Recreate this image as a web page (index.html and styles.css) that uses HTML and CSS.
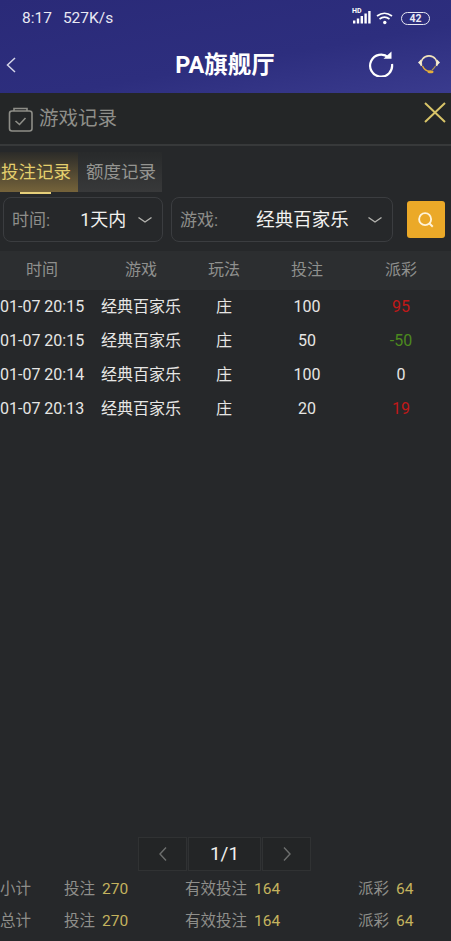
FILE: index.html
```html
<!DOCTYPE html>
<html lang="zh">
<head>
<meta charset="utf-8">
<title>PA旗舰厅</title>
<link rel="stylesheet" href="styles.css">
</head>
<body>
<div class="page">
  <div class="top">
    <div class="status">
      <div class="status-left"><span>8:17</span><span>527K/s</span></div>
      <div class="status-right">
        <div class="sigwrap">
          <span class="hd">HD</span>
          <svg class="sig" width="19" height="14" viewBox="0 0 19 14"><g fill="#fff"><rect x="1" y="10.500" width="2.400" height="3"/><rect x="4.800" y="8.500" width="2.400" height="5"/><rect x="8.600" y="6" width="2.400" height="7.500"/><rect x="12.400" y="3.500" width="2.400" height="10"/><rect x="16.200" y="1" width="2.400" height="12.500"/></g></svg>
        </div>
        <svg class="wifi" width="18" height="14" viewBox="0 0 18 14"><g fill="none" stroke="#fff" stroke-width="1.700"><path d="M1 5q7.500-5.500 15 0"/><path d="M3.500 8q5-3.600 10 0"/></g><circle cx="8.800" cy="11.500" r="1.700" fill="#fff"/></svg>
        <div class="battery">42</div>
      </div>
    </div>
    <div class="nav">
      <svg class="back" width="12" height="18" viewBox="0 0 12 18"><path d="M10 2 2.500 9 10 16" fill="none" stroke="#d5d5e8" stroke-width="1.500"/></svg>
      <div class="nav-title">PA旗舰厅</div>
      <svg class="refresh" width="26" height="26" viewBox="0 0 26 26"><path d="M20.500 6.500A11 11 0 1 0 24 13" fill="none" stroke="#fff" stroke-width="2.200"/><path d="M15.500 7.800h8V0.500z" fill="#fff"/></svg>
      <svg class="agent" width="24" height="24" viewBox="0 0 24 24"><path d="M4.500 14A8 7.500 0 1 1 19.500 14" fill="none" stroke="#f0e2bc" stroke-width="1.600"/><path d="M1 10.500 4 7.500v6zM23 10.500 20 7.500v6z" fill="#f3ecd8"/><path d="M5.500 14q2.500 5 7 5.500" fill="none" stroke="#e3ad3b" stroke-width="1.500"/><path d="M18.500 14q-1.500 2.500-3.500 4" fill="none" stroke="#b59a50" stroke-width="1.200"/><ellipse cx="13.500" cy="19.800" rx="3" ry="1.500" fill="#e3ad3b"/></svg>
    </div>
  </div>
  <div class="panel">
    <div class="panel-head">
      <svg class="panel-icon" width="26" height="26" viewBox="0 0 26 26"><g fill="none" stroke="#8e8e88" stroke-width="1.600"><rect x="1.500" y="4" width="22.500" height="20" rx="2.500"/><path d="M6 4V1.500h13V4"/><path d="M7.500 14l4 3.500 6-6.500"/></g></svg>
      <span class="panel-title">游戏记录</span>
      <svg class="close" width="24" height="24" viewBox="0 0 24 24"><path d="M2 2 22 21M22 2 2 21" stroke="#d8c468" stroke-width="2" fill="none"/></svg>
    </div>
    <div class="tabs">
      <div class="tab tab-on">投注记录</div>
      <div class="tab">额度记录</div>
    </div>
    <div class="filters">
      <div class="select sel-time">
        <span class="sel-label">时间:</span><span class="sel-value">1天内</span>
        <svg class="chev" width="16" height="8" viewBox="0 0 16 8"><path d="M1.500 1.500 8 6l6.500-4.500" fill="none" stroke="#b5b5b0" stroke-width="1.400"/></svg>
      </div>
      <div class="select sel-game">
        <span class="sel-label">游戏:</span><span class="sel-value">经典百家乐</span>
        <svg class="chev" width="16" height="8" viewBox="0 0 16 8"><path d="M1.500 1.500 8 6l6.500-4.500" fill="none" stroke="#b5b5b0" stroke-width="1.400"/></svg>
      </div>
      <div class="search">
        <svg width="20" height="20" viewBox="0 0 16 16"><circle cx="7.300" cy="7.300" r="4.800" fill="none" stroke="#fff3d8" stroke-width="1.500"/><path d="M10.800 10.800l2.600 2.600" stroke="#fff3d8" stroke-width="1.500"/></svg>
      </div>
    </div>
    <div class="row head"><span>时间</span><span>游戏</span><span>玩法</span><span>投注</span><span>派彩</span></div>
    <div class="row"><span>01-07 20:15</span><span>经典百家乐</span><span>庄</span><span>100</span><span class="red">95</span></div>
    <div class="row"><span>01-07 20:15</span><span>经典百家乐</span><span>庄</span><span>50</span><span class="green">-50</span></div>
    <div class="row"><span>01-07 20:14</span><span>经典百家乐</span><span>庄</span><span>100</span><span>0</span></div>
    <div class="row"><span>01-07 20:13</span><span>经典百家乐</span><span>庄</span><span>20</span><span class="red">19</span></div>
    <div class="spacer"></div>
    <div class="pager">
      <div class="pg pg-side"><svg width="10" height="16" viewBox="0 0 10 16"><path d="M8 1.500 2 8l6 6.500" fill="none" stroke="#6d6f6e" stroke-width="1.400"/></svg></div>
      <div class="pg pg-mid">1/1</div>
      <div class="pg pg-side"><svg width="10" height="16" viewBox="0 0 10 16"><path d="M2 1.500 8 8l-6 6.500" fill="none" stroke="#6d6f6e" stroke-width="1.400"/></svg></div>
    </div>
    <div class="sum"><span>小计</span><span>投注<b>270</b></span><span>有效投注<b>164</b></span><span>派彩<b>64</b></span></div>
    <div class="sum"><span>总计</span><span>投注<b>270</b></span><span>有效投注<b>164</b></span><span>派彩<b>64</b></span></div>
  </div>
</div>
</body>
</html>
```
FILE: styles.css
```css
* { box-sizing: border-box; }
html, body { margin: 0; padding: 0; }
body { background: #26282a; font-family: Roboto, "Noto Sans CJK SC", sans-serif; overflow: hidden; }
.page { width: 451px; height: 941px; display: flex; flex-direction: column; }
.top { height: 93px; background: linear-gradient(170deg, #2a2a78 0%, #2d2e7e 60%, #3a3b8e 100%); color: #fff; flex: none; }
.status { height: 36px; padding: 0 21px 0 22px; display: flex; justify-content: space-between; align-items: center; font-size: 15.500px; color: #e9e9f3; }
.status-left { display: flex; gap: 11px; }
.status-right { display: flex; align-items: center; gap: 6px; }
.sigwrap { position: relative; width: 18px; height: 14px; margin-top: -2px; }
.sig { display: block; }
.hd { position: absolute; left: 0; top: -3px; font-size: 7px; font-weight: 700; line-height: 8px; color: #fff; }
.battery { width: 29px; height: 13px; margin-left: 1px; border: 1.300px solid #e6e6f0; border-radius: 7px; font-size: 10.500px; font-weight: 700; line-height: 11px; text-align: center; }
.nav { height: 57px; padding: 0 0 0 5px; display: flex; align-items: center; }
.back { flex: none; }
.nav-title { flex: none; width: 100px; margin-left: 158px; font-size: 23.500px; font-weight: 700; white-space: nowrap; text-align: center; line-height: 30px; }
.refresh { flex: none; margin-left: 93px; margin-bottom: 2px; }
.agent { flex: none; margin-left: 23px; margin-bottom: 2px; }
.panel { flex: 1; display: flex; flex-direction: column; min-height: 0; }
.panel-head { height: 53px; display: flex; align-items: center; padding: 0 1px 0 8px; border-bottom: 2px solid #37393a; background: #242627; }
.panel-icon { flex: none; margin-top: 3px; }
.panel-title { margin-left: 5px; font-size: 19.500px; line-height: 26px; color: #8f8f8a; }
.close { margin-left: auto; margin-right: 3px; margin-bottom: 12px; }
.tabs { display: flex; margin-top: 6px; height: 40px; flex: none; }
.tab { width: 84px; padding-left: 8px; background: linear-gradient(180deg, #282a2b, #38393a); color: #959591; font-size: 17.500px; line-height: 40px; white-space: nowrap; }
.tab-on { width: 78px; padding-left: 1px; background: linear-gradient(180deg, #2b2b29, #75633a); color: #e4cf6d; position: relative; }
.tab-on::after { content: ""; position: absolute; left: 20px; bottom: -2px; width: 31px; height: 2px; background: #e6cf7a; }
.filters { display: flex; align-items: center; padding: 5px 6px 0 3px; height: 50px; flex: none; }
.select { height: 45px; border: 1px solid #3b3d40; border-radius: 8px; display: flex; align-items: center; font-size: 17px; line-height: 24px; flex: none; }
.sel-time { width: 160px; padding-left: 8px; }
.sel-game { width: 222px; margin-left: 8px; padding-left: 8px; }
.sel-label { color: #8e8e8a; }
.sel-value { color: #f2f2f0; font-size: 18.500px; }
.sel-time .sel-value { margin-left: 30px; font-size: 18px; }
.sel-game .sel-value { margin-left: 38px; }
.chev { margin-left: auto; margin-right: 9px; }
.search { width: 38px; height: 37px; margin-left: 14px; border-radius: 3px; background: #eba928; display: flex; align-items: center; justify-content: center; flex: none; }
.row { display: grid; grid-template-columns: 84px 114px 52px 114px 74px; height: 34px; line-height: 34px; font-size: 16px; color: #e6e6e4; text-align: center; white-space: nowrap; flex: none; }
.row span:first-child { text-align: left; }
.head { height: 39px; line-height: 37px; margin-top: 9px; background: #2c2e30; color: #8f908e; }
.head span:first-child { text-align: center; }
.red { color: #c01818; }
.green { color: #4c8a1e; }
.spacer { flex: 1; }
.pager { display: flex; gap: 1px; margin: 0 0 1px 138px; height: 34px; flex: none; }
.pg { height: 34px; background: #232526; border: 1px solid #303233; display: flex; align-items: center; justify-content: center; }
.pg-side { width: 49px; }
.pg-mid { width: 73px; color: #f0f0ee; font-size: 19px; line-height: 30px; }
.sum { display: grid; grid-template-columns: 64px 121px 173px 1fr; height: 32px; line-height: 34px; font-size: 15.500px; color: #8f8f8b; white-space: nowrap; flex: none; }
.sum b { font-weight: 400; color: #c4b35e; margin-left: 7px; }
.sum:last-child { margin-bottom: 5px; }
```
